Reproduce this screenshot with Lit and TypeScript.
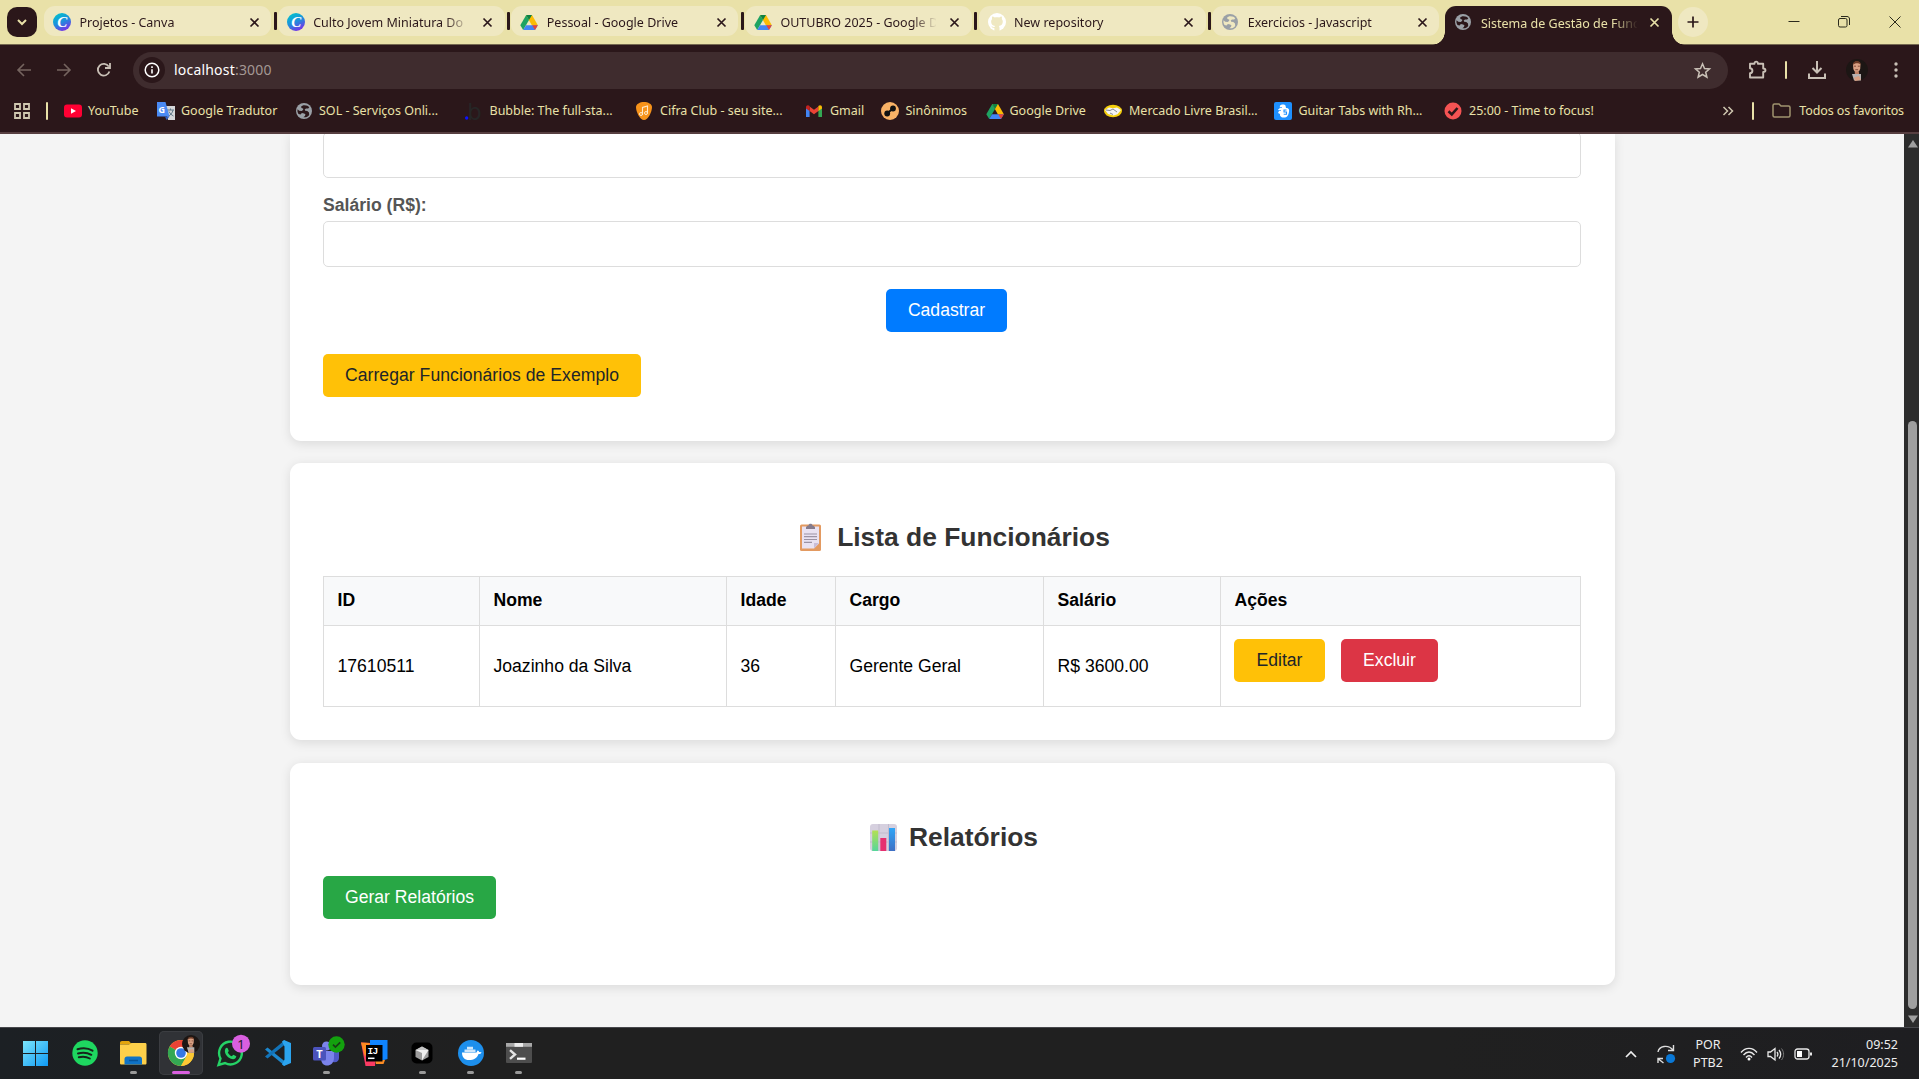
import { LitElement, html, css, svg } from "lit";
import { customElement, property } from "lit/decorators.js";

const drive = svg`<path d="M6 2h6l6 10.5h-6z" fill="#fbbc04"/><path d="M6.2 2 9 6.9 3.2 17 .3 12.2z" fill="#1ea362"/><path d="M6.2 2H12L9 6.9z" fill="#0d8043"/><path d="M3.2 17 6 12.2h11.8L15 17z" fill="#4285f4"/><path d="M12.2 12.2h5.6L15 17z" fill="#ea4335"/>`;
const globe = (cut: string) => svg`<circle cx="9" cy="9" r="8" fill="#9aa0a6"/><path d="M9.5 3.2c-1.600 0-2.800.6-3.600 1.700L7 6.200l1.200.2v1.300L6.800 9l-2.600-.2-1.600-1.500C2.200 9 2.500 10.500 3.500 12l2 .4 1.400-1.300 2.300.3 1.300 1.200-.6 1.500-1.500 1.100c2.400.5 4.400-.2 5.800-2.200l-.2-2.500-1.700-1.500-2.100-.2-.5-1.200 1.300-1.200h2.200l1.100-1.200c-1-1.200-2.300-1.900-5-2z" fill="${cut}"/>`;
const canva = (id: string) => svg`<defs><linearGradient id=${id} x1="0.2" y1="0" x2="0.7" y2="1"><stop offset="0" stop-color="#00c4cc"/><stop offset=".5" stop-color="#1f8fdc"/><stop offset="1" stop-color="#7d2ae8"/></linearGradient></defs><circle cx="9" cy="9" r="9" fill="url(#${id})"/><text x="9.300" y="14" text-anchor="middle" font-family="Liberation Serif, serif" font-style="italic" font-weight="700" font-size="15" fill="#fff">C</text>`;
const cross = svg`<path d="M.500.500l8 8M8.500.500l-8 8" stroke="currentColor" stroke-width="1.700" fill="none"/>`;
const face = svg`<circle cx="11" cy="11" r="11" fill="#1c1614"/><path d="M7 5.500C7.500 1.800 14 1.500 14.500 5.500l-.3 4.300c-.7 2.500-2.300 3.700-3.500 3.700S7.800 12 7.300 9.800z" fill="#d9a083"/><path d="M6.800 5.800C6.800 1 14.800.600 14.800 5.600 12.500 3.700 9 3.800 6.800 5.800z" fill="#6b3a26"/><path d="M8.800 12.500h4l.4 3h-4.400z" fill="#c08165"/><path d="M6 15h9v6.500H8z" fill="#b7b2b0"/><path d="M8 18.500l5-1.500 2 4-6 1z" fill="#d9a083"/><path d="M8 7.200h2M11.800 7.200h2M9.300 10.700h2.800" stroke="#6e3a2b" stroke-width=".8"/>`;
const github = svg`<circle cx="9" cy="9" r="9" fill="#fff"/><path d="M6.400 18v-3.100c-2 .4-2.600-.8-3-1.600 1.500-.3 1.400 1.300 3.100.8.1-.5.300-.9.600-1.200-2.500-.3-4-1.400-4-4.300 0-1 .3-1.800 1-2.500-.2-.7-.2-1.600.1-2.500 1 0 1.800.5 2.500 1 1.400-.4 3-.4 4.500 0 .8-.6 1.600-1 2.500-1 .3.900.4 1.700.1 2.500.7.7 1 1.500 1 2.500 0 2.900-1.500 4-4 4.300.4.400.7 1 .7 2V18z" fill="#efe8c1"/>`;

interface Tab { title: string; icon: unknown }
const tabs: Tab[] = [
  { title: "Projetos - Canva", icon: canva("cv1") },
  { title: "Culto Jovem Miniatura Do", icon: canva("cv2") },
  { title: "Pessoal - Google Drive", icon: drive },
  { title: "OUTUBRO 2025 - Google D", icon: drive },
  { title: "New repository", icon: github },
  { title: "Exercicios - Javascript", icon: globe("#efe8c1") },
];

interface Bookmark { label: string; start: number; pad: number; icon: unknown }
const bookmarks: Bookmark[] = [
  { label: "YouTube", start: 64, pad: 24, icon: svg`<rect y="2.500" width="18" height="13" rx="3" fill="#ff0033"/><path d="M7 6.300v5.400L12 9z" fill="#fff"/>` },
  { label: "Google Tradutor", start: 157, pad: 24, icon: svg`<path d="M8 4h10v14H11z" fill="#d5d7da"/><path d="M10 8h7M13.500 6.500V8M16 8c-.5 3-2.500 5-4.500 6M12 9.500c1 2 2.500 3.500 4.500 4.500" stroke="#607988" fill="none"/><path d="M0 0h8.500l4 14.500H0z" fill="#4a8af4"/><path d="M8 14.500h4.500L9.500 18z" fill="#2f5fc4"/><text x="1.600" y="10.500" font-family="Open Sans, sans-serif" font-weight="700" font-size="9" fill="#fff">G</text>` },
  { label: "SOL - Serviços Onli...", start: 295, pad: 24, icon: globe("#2b171a") },
  { label: "Bubble: The full-sta...", start: 465, pad: 24.500, icon: svg`<circle cx="1.700" cy="16" r="1.700" fill="#0c12ff"/><text x="2.500" y="17.500" font-family="Inter, sans-serif" font-size="23" fill="#262626">b</text>` },
  { label: "Cifra Club - seu site...", start: 636, pad: 24, icon: svg`<path d="M8 0c4 0 8 2 8 5 0 5-4 13-8 13S0 10 0 5C0 2 4 0 8 0z" fill="#f7931a"/><path d="M6.500 13V5.500L11.500 4v7.500" fill="none" stroke="#ffe9c9" stroke-width="1.100"/><circle cx="5" cy="12" r="1.500" fill="none" stroke="#ffe9c9"/><circle cx="10" cy="11" r="1.500" fill="none" stroke="#ffe9c9"/>` },
  { label: "Gmail", start: 806, pad: 24, icon: svg`<path d="M0 5v10h3.600V8z" fill="#4285f4"/><path d="M16 5v10h-3.600V8z" fill="#34a853"/><path d="M3.600 4.500V9L8 12.200 12.400 9V4.500L8 7.800z" fill="#ea4335"/><path d="M0 5.500C0 3.200 2.200 2.800 3.600 4v5L0 6.500z" fill="#c5221f"/><path d="M16 5.500c0-2.300-2.200-2.700-3.600-1.500v5L16 6.500z" fill="#fbbc04"/>` },
  { label: "Sinônimos", start: 881, pad: 24.500, icon: svg`<circle cx="9" cy="9" r="9" fill="#f9b266"/><path d="M6 11.500 12 6.500" stroke="#111" stroke-width="2"/><circle cx="12" cy="6.500" r="2.900" fill="#111"/><circle cx="6.200" cy="11.500" r="2.900" fill="#111"/>` },
  { label: "Google Drive", start: 986, pad: 23.500, icon: drive },
  { label: "Mercado Livre Brasil...", start: 1104, pad: 25, icon: svg`<ellipse cx="9" cy="9" rx="9" ry="6.200" fill="#f4cf0d"/><path d="M1 8 5 5.500l4 .8L13 5.500 17 8l-3.500 4.200-4 1.300L4 12z" fill="#f4f4f4"/><path d="M2 8l4 .5 3-1.500 4 3M6 11l3 1.500" stroke="#66707c" stroke-width=".8" fill="none"/>` },
  { label: "Guitar Tabs with Rh...", start: 1274, pad: 24.500, icon: svg`<rect width="18" height="18" rx="2" fill="#1e90ff"/><path d="M6 3.500C7 2 11 2 11.500 3.500L12 6c3 0 3.500 2 3 4s-1 5-4 5.500C9 16 5.500 15 6 12L4 11l1-2-1-1.500 1.500-1z" fill="#fff"/><path d="M12.500 8H10v2h2.500v2.200H9.700" stroke="#1e90ff" fill="none" stroke-width="1.100"/><path d="M4 5.500h4M4 8.500h3" stroke="#1e90ff" stroke-width=".7"/>` },
  { label: "25:00 - Time to focus!", start: 1444, pad: 25, icon: svg`<circle cx="9" cy="9" r="8.500" fill="#f55353"/><path d="M4.500 9.300 7.800 12.400 13.500 6" stroke="#2b171a" stroke-width="2.600" fill="none"/>` },
];

@customElement("browser-chrome")
class BrowserChrome extends LitElement {
  static styles = css`
    :host { display: block; font-family: "Noto Sans", "Open Sans", sans-serif; font-size: 12.500px; }
    svg { display: block; flex: none; overflow: visible; }
    .strip { display: flex; box-sizing: border-box; height: 45px; padding: 6px 0 0 7px; background: #e9e1a8; color: #2b171a; border-bottom: 1px solid #74684f; }
    .search { width: 30px; height: 30px; margin: 1px 7px 0 0; border-radius: 10px; background: #2b171a; display: flex; align-items: center; justify-content: center; flex: none; }
    .slot { width: 233.650px; display: flex; flex: none; }
    .tab { width: 227px; height: 30px; border-radius: 11px; background: #efe8c1; display: flex; align-items: center; box-sizing: border-box; padding: 2px 0 0 9px; }
    .bar { width: 3px; height: 18px; border-radius: 1px; background: #2b171a; margin: 6px 0 0 2.500px; }
    .slot:nth-last-of-type(4) .bar { visibility: hidden; }
    .title { width: 156px; margin-left: 8.500px; padding-top: 1.500px; white-space: nowrap; line-height: 18px; -webkit-mask-image: linear-gradient(90deg, #000 132px, transparent 157px); }
    .tab .close { margin-left: 14px; }
    .active { position: relative; width: 227px; height: 39px; flex: none; margin-left: -0.900px; background: #2b171a; border-radius: 11px 11px 0 0; display: flex; align-items: flex-start; color: #e9e1a8; box-sizing: border-box; padding: 7px 0 0 9.500px; }
    .active::before, .active::after { content: ""; position: absolute; bottom: 0; width: 13px; height: 13px; }
    .active::before { left: -13px; background: radial-gradient(circle at 0 0, transparent 12.500px, #2b171a 13px); }
    .active::after { right: -13px; background: radial-gradient(circle at 100% 0, transparent 12.500px, #2b171a 13px); }
    .active .close { margin: 5px 0 0 13px; }
    .plus { width: 30px; height: 30px; border-radius: 50%; background: #efe8c1; margin: 1px 0 0 6px; display: flex; align-items: center; justify-content: center; }
    .wins { display: flex; margin-left: auto; padding: 10px 18.500px 0 0; gap: 38.500px; color: #2b2a1c; }
    .tools { height: 50px; display: flex; align-items: center; background: #2b171a; padding-left: 16px; color: #c9c0b6; }
    .nav { width: 40px; flex: none; }
    .dim { color: #75645f; }
    .omni { width: 1595px; margin-left: -3px; height: 37px; border-radius: 19px; background: #3f2c2e; display: flex; align-items: center; box-sizing: border-box; padding: 0 17px 0 6px; flex: none; }
    .info { width: 26px; height: 26px; border-radius: 50%; background: #2b171a; display: flex; align-items: center; justify-content: center; color: #fff; }
    .url { margin-left: 9px; flex: 1; font-size: 14px; line-height: 20px; color: #fff; letter-spacing: 0.200px; }
    .url span { color: #a49894; }
    .icons { display: flex; align-items: center; margin-left: 20px; }
    .vline { width: 2px; height: 18px; background: #e9e1a8; border-radius: 1px; flex: none; }
    .marks { height: 31px; background: #2b171a; border-bottom: 2px solid #573f41; display: flex; align-items: center; padding: 0 15px 6px 14px; color: #e9e1a8; }
    .apps { width: 32px; flex: none; }
    .mark { display: flex; align-items: center; white-space: nowrap; flex: none; line-height: 18px; }
    .first { width: 16px; flex: none; }
    .all { display: flex; align-items: center; margin-left: auto; letter-spacing: -0.100px; }
  `;
  render() {
    return html`
      <div class="strip">
        <div class="search"><svg width="10" height="7"><path d="M1 1l4 4 4-4" stroke="#e9e1a8" stroke-width="2" fill="none"/></svg></div>
        ${tabs.map((t) => html`<div class="slot"><div class="tab"><svg width="18" height="18">${t.icon}</svg><div class="title">${t.title}</div><svg class="close" width="9" height="9">${cross}</svg></div><div class="bar"></div></div>`)}
        <div class="active"><svg width="18" height="18">${globe("#2b171a")}</svg><div class="title">Sistema de Gestão de Func</div><svg class="close" width="9" height="9">${cross}</svg></div>
        <div class="plus"><svg width="12" height="12"><path d="M6 .5v11M.5 6h11" stroke="#2b171a" stroke-width="1.700"/></svg></div>
        <div class="wins">
          <svg width="12" height="12"><path d="M.5 5.500h11" stroke="currentColor"/></svg>
          <svg width="12" height="12"><rect x=".5" y="2.500" width="8.500" height="8.500" rx="1.500" fill="none" stroke="currentColor"/><path d="M3 .5h6c1.500 0 2.500 1 2.500 2.500v6" fill="none" stroke="currentColor"/></svg>
          <svg width="12" height="12"><path d="M.5.500l11 11M11.500.500l-11 11" stroke="currentColor"/></svg>
        </div>
      </div>
      <div class="tools">
        <div class="nav dim"><svg width="16" height="14"><path d="M15 7H2M8 1 2 7l6 6" stroke="currentColor" stroke-width="1.600" fill="none"/></svg></div>
        <div class="nav dim"><svg width="16" height="14"><path d="M1 7h13M8 1l6 6-6 6" stroke="currentColor" stroke-width="1.600" fill="none"/></svg></div>
        <div class="nav"><svg width="16" height="16"><path d="M13.400 9.500A5.900 5.900 0 1 1 12.800 4.600M14 1v5H9" stroke="currentColor" stroke-width="1.800" fill="none"/></svg></div>
        <div class="omni">
          <div class="info"><svg width="16" height="16"><circle cx="8" cy="8" r="6.800" stroke="#fff" stroke-width="1.500" fill="none"/><path d="M8 7.200v4.300M8 4.300v1.700" stroke="#fff" stroke-width="1.600"/></svg></div>
          <div class="url">localhost<span>:3000</span></div>
          <svg width="17" height="17"><path d="M8.500 1.800l2 4.700 5 .4-3.800 3.300 1.200 5-4.400-2.700-4.400 2.700 1.200-5L1.500 6.900l5-.4z" stroke="#c9c0b6" stroke-width="1.500" fill="none"/></svg>
        </div>
        <div class="icons">
          <svg width="20" height="20"><path d="M2 3.800h4.500C6.300 1 10 .9 9.900 3.800h5.300v4.700c3 0 3 3.500 0 3.500v5.500H2v-4.200c3.200-.3 3.200-4.800 0-5z" stroke="currentColor" stroke-width="1.900" fill="none" stroke-linejoin="round"/></svg>
          <div class="vline" style="margin:0 21px 0 17px"></div>
          <svg width="18" height="18"><path d="M9 0v11M4.500 7 9 11.500 13.500 7M1 12.500V17h16v-4.500" stroke="currentColor" stroke-width="2" fill="none"/></svg>
          <svg style="margin:0 26px 0 20px" width="22" height="22">${face}</svg>
          <svg width="4" height="16"><circle cx="2" cy="2" r="1.700" fill="currentColor"/><circle cx="2" cy="8" r="1.700" fill="currentColor"/><circle cx="2" cy="14" r="1.700" fill="currentColor"/></svg>
        </div>
      </div>
      <div class="marks">
        <div class="apps"><svg width="16" height="16"><path d="M1 1h5v5H1zM10 1h5v5h-5zM1 10h5v5H1zM10 10h5v5h-5z" stroke="#cfc7b0" stroke-width="1.800" fill="none"/></svg></div>
        <div class="vline"></div><div class="first"></div>
        ${bookmarks.map((b, i) => html`<div class="mark" style="width:${(bookmarks[i + 1]?.start ?? 1722) - b.start}px"><svg width="18" height="18">${b.icon}</svg><span style="margin-left:${b.pad - 18}px">${b.label}</span></div>`)}
        <svg width="12" height="10"><path d="M1.500 1l4 4-4 4M6.500 1l4 4-4 4" stroke="#cfc7b0" stroke-width="1.500" fill="none"/></svg>
        <div class="all"><div class="vline"></div><svg style="margin:0 8px 0 18px" width="19" height="15"><path d="M1 2.500C1 1.500 1.500 1 2.500 1H7l2 2h7.500c1 0 1.500.5 1.500 1.500v8c0 1-.5 1.500-1.500 1.500h-14C1.500 14 1 13.500 1 12.500z" stroke="#a0946f" stroke-width="1.500" fill="none"/></svg><span>Todos os favoritos</span></div>
      </div>`;
  }
}

@customElement("staff-page")
class StaffPage extends LitElement {
  static styles = css`
    :host { display: flex; height: 893px; background: #f4f4f4; overflow: hidden; font-family: "Liberation Sans", Arial, sans-serif; font-size: 17.600px; }
    .view { width: 1904px; box-sizing: border-box; padding-left: 1px; display: flex; flex-direction: column; align-items: center; flex: none; }
    .card { width: 1325px; flex: none; box-sizing: border-box; background: #fff; border-radius: 11px; box-shadow: 0 2.200px 11px rgba(0, 0, 0, 0.1); padding: 59px 34px 0 33px; margin-bottom: 22px; }
    .form { height: 307px; padding-top: 0; border-radius: 0 0 11px 11px; }
    .list { height: 277px; margin-bottom: 23px; }
    .report { height: 222px; margin-bottom: 0; }
    .field { box-sizing: border-box; height: 46px; border: 1px solid #ddd; border-radius: 5px; }
    .cut { margin-top: -2px; clip-path: inset(2px 0 0 0); }
    label { display: block; margin: 17px 0 6px; line-height: 20px; font-weight: 700; color: #555; }
    .center { display: flex; justify-content: center; padding-right: 11px; margin: 22px 0; }
    .btn { display: inline-flex; box-sizing: border-box; height: 43px; padding-bottom: 1px; align-items: center; justify-content: center; border-radius: 5px; white-space: nowrap; color: #fff; }
    .save { width: 121px; background: #007bff; }
    .load { width: 318px; background: #ffc107; color: #212529; letter-spacing: 0.040px; }
    .edit { width: 91px; background: #ffc107; color: #212529; }
    .drop { width: 97px; background: #dc3545; }
    .make { width: 173px; background: #28a745; }
    h2 { margin: 0 0 24px; height: 30px; display: flex; justify-content: center; align-items: center; gap: 7px; font-size: 26.400px; line-height: 30px; color: #333; }
    h2 svg { display: block; }
    .grid { display: grid; grid-template-columns: 156px 247px 109px 208px 177px 360px; grid-template-rows: 49px 81px; border: solid #ddd; border-width: 1px 0 0 1px; width: 1257px; }
    .cell { display: flex; align-items: center; padding: 0 0 0 13.500px; border: solid #ddd; border-width: 0 1px 1px 0; }
    .head { background: #f8f9fa; font-weight: 700; padding-bottom: 2px; }
    .acts { align-items: flex-start; gap: 16px; padding: 13px 0 0 13px; }
    .scroll { flex: 1; background: #2c2c2c; display: flex; flex-direction: column; align-items: center; padding: 6px 0 4px 2px; box-sizing: border-box; }
    .thumb { width: 9px; height: 588px; border-radius: 5px; background: #9f9f9f; margin-bottom: auto; }
    .scroll svg { display: block; }
    .up { margin-bottom: 273px; }
  `;
  render() {
    const head = ["ID", "Nome", "Idade", "Cargo", "Salário", "Ações"];
    const row = ["17610511", "Joazinho da Silva", "36", "Gerente Geral", "R$ 3600.00"];
    return html`
      <div class="view">
        <section class="card form">
          <div class="field cut"></div>
          <label>Salário (R$):</label>
          <div class="field"></div>
          <div class="center"><span class="btn save">Cadastrar</span></div>
          <span class="btn load">Carregar Funcionários de Exemplo</span>
        </section>
        <section class="card list">
          <h2><svg width="36" height="30"><rect x="6" y="2.500" width="21" height="26.500" rx="1.500" fill="#e39a61"/><path d="M8 4.500h17v17l-5 5H8z" fill="#e9e2f2"/><path d="M25 21h-5v5.500z" fill="#c9bdd8"/><path d="M12 7c-.5-2 1-3.500 2.500-3.500 0-2.200 4-2.200 4 0 1.500 0 3 1.500 2.500 3.500z" fill="#857b8c"/><path d="M10 12h13M10 14.700h13M10 17.500h13M10 20.300h8" stroke="#9b92a4" stroke-width="1.200"/></svg>Lista de Funcionários</h2>
          <div class="grid">
            ${head.map((h) => html`<div class="cell head">${h}</div>`)}
            ${row.map((c) => html`<div class="cell">${c}</div>`)}
            <div class="cell acts"><span class="btn edit">Editar</span><span class="btn drop">Excluir</span></div>
          </div>
        </section>
        <section class="card report">
          <h2><svg width="36" height="30"><defs><linearGradient id="g1" x1="0" y1="0" x2="0" y2="1"><stop offset="0" stop-color="#b4e052"/><stop offset="1" stop-color="#56d69b"/></linearGradient><linearGradient id="g2" x1="0" y1="0" x2="0" y2="1"><stop offset="0" stop-color="#2fa5f7"/><stop offset="1" stop-color="#3e6fc4"/></linearGradient></defs><rect x="4" y="2" width="27" height="27" rx="3" fill="#d6d0df"/><path d="M13 2v27M22.500 2v27M4 11h27M4 20h27" stroke="#c2bccd"/><rect x="6.200" y="8.500" width="6" height="20.500" fill="url(#g1)"/><rect x="14.300" y="16" width="6" height="13" fill="#e6306f"/><rect x="23" y="6" width="6" height="23" fill="url(#g2)"/></svg>Relatórios</h2>
          <span class="btn make">Gerar Relatórios</span>
        </section>
      </div>
      <div class="scroll">
        <svg class="up" width="10" height="8"><path d="M5 0l5 7.500H0z" fill="#9f9f9f"/></svg>
        <div class="thumb"></div>
        <svg width="10" height="8"><path d="M5 8l5-7.500H0z" fill="#9f9f9f"/></svg>
      </div>`;
  }
}

interface App { icon: unknown; state: "" | "open" | "current" }
const apps: App[] = [
  { state: "", icon: svg`<circle cx="13" cy="13" r="12.700" fill="#1ed760"/><path d="M5.500 9.300c5-1.500 11-1 15 1.400M6 13.500c4.500-1.300 9.500-.8 13.300 1.300M6.800 17.300c4-1 7.800-.6 11 1.200" stroke="#17241b" stroke-width="2" stroke-linecap="round" fill="none"/>` },
  { state: "open", icon: svg`<path d="M0 3C0 1.700.7 1 2 1h7l3 3.500H0z" fill="#e2a50c"/><path d="M0 4.500h9L11.500 3H25c1 0 1.500.5 1.500 1.500V23c0 1-.5 1.500-1.500 1.500H1.500C.5 24.500 0 24 0 23z" fill="#fdd04a"/><path d="M4.500 24.500V19c0-1.500 1-2.500 2.500-2.500h12.500c1.500 0 2.500 1 2.500 2.500v5.500z" fill="#0f73c6"/><path d="M9 20.500h9" stroke="#07559b" stroke-width="1.500"/>` },
  { state: "current", icon: svg`<circle cx="13" cy="13" r="13" fill="#fcc934"/><path d="M13 13 1.700 6.500A13 13 0 0 1 24.300 6.500z" fill="#ea4335"/><path d="M13 13 1.700 6.500A13 13 0 0 0 13 26l5.600-9.800z" fill="#34a853"/><path d="M13 7h11.500A13 13 0 0 1 13 26l5.500-9.800z" fill="#fcc934"/><circle cx="13" cy="13" r="6.200" fill="#fff"/><circle cx="13" cy="13" r="4.800" fill="#3478e5"/><g transform="translate(14 -5) scale(.82)">${face}</g>` },
  { state: "", icon: svg`<path d="M1.500 25 3.500 18.500A11.400 11.400 0 1 1 8 23z" fill="#1b2620" stroke="#25d366" stroke-width="2.400"/><path d="M8.500 8.500c1-1 2-1 2.500.5l.8 2-1 1.500c1 2 2.200 3 4 3.800l1.500-1.500 3 1.500c-.3 3-3 3.500-5.500 2.500-3.500-1.500-7.500-6-5.300-10.300z" fill="#25d366"/><circle cx="24" cy="3.700" r="9" fill="#d95fe0"/><text x="24" y="8.600" text-anchor="middle" font-family="Noto Sans, sans-serif" font-size="13" fill="#1c1c1c">1</text>` },
  { state: "", icon: svg`<path d="M0 9.500 2.500 7.500 20 21.500V26z" fill="#1c88cf"/><path d="M0 16.500 2.500 18.500 20 4.500V0z" fill="#1273b8"/><path d="M19 0l7 3v20l-7 3-2-1.500 2.500-5V6.500L17 1.500z" fill="#2ba4ef"/>` },
  { state: "open", icon: svg`<circle cx="13.500" cy="6" r="4.500" fill="#7b83eb"/><circle cx="22" cy="9" r="3" fill="#5059c9"/><path d="M19 12h7v6c0 3-2.500 5-6 4z" fill="#5059c9"/><path d="M8 11h13v7c0 5-3.500 7.500-7 7.500S8 23 8 18z" fill="#7b83eb"/><rect y="7" width="13" height="13.500" rx="1.500" fill="#4b53bc"/><text x="6.500" y="17.700" text-anchor="middle" font-family="Open Sans, sans-serif" font-weight="700" font-size="11" fill="#fff">T</text><circle cx="23.500" cy="4.500" r="8.200" fill="#13a10e"/><path d="M20 4.700l2.400 2.400 4.800-4.800" stroke="#163d15" stroke-width="1.700" fill="none"/>` },
  { state: "", icon: svg`<path d="M0 2.500 10 3l5 10-1 13H4.500z" fill="#fc3b63"/><path d="M0 2.500 9 3 4 17z" fill="#ff8a20"/><path d="M9 0h17.500v19L20 21 9 9z" fill="#0f84ff"/><path d="M14 20h10l-1.500 4H15z" fill="#fd8c24"/><rect x="5" y="5" width="16.500" height="16.500" fill="#000"/><text x="6.500" y="14" font-family="Liberation Mono, monospace" font-weight="700" font-size="9.500" letter-spacing="-.7" fill="#fff">IJ</text><path d="M7 18.300h6.500" stroke="#fff" stroke-width="1.500"/>` },
  { state: "open", icon: svg`<rect x="2.500" y="2.500" width="21" height="21" rx="5" fill="#000"/><path d="M13 6.500l6.500 3.500v7L13 20.500 6.500 17v-7z" fill="#9c9c9c"/><path d="M6.500 10h13L13 20.500V13z" fill="#eee"/><path d="M13 6.500l6.500 3.500h-13z" fill="#c4c4c4"/>` },
  { state: "open", icon: svg`<circle cx="13" cy="13" r="13" fill="#1d8fec"/><path d="M4 12.500h14.500l1-2c1.300 0 1.500 1 1.500 1.500l2.500.3c-.5 1.500-1.600 1.800-3 1.800-1.500 4-4.500 6-9.500 6-4.500 0-7-2.800-7-7.600z" fill="#fff"/><path d="M6.500 9.500h11v2.500h-11zM9 6.800h6v2.500H9z" fill="#cfe7fb"/>` },
  { state: "open", icon: svg`<rect y="3" width="26" height="20" rx="1" fill="#4d4d4d"/><path d="M0 3h26v3.800H0z" fill="#a8a8a8"/><path d="M8.500 3H17v3.800H8.500z" fill="#ececec"/><path d="M4 10.200l5 4.300-5 4.300" stroke="#e3e3e3" stroke-width="2.400" fill="none"/><path d="M11 18.700h8.500" stroke="#fff" stroke-width="2.200"/>` },
];

@customElement("task-bar")
class TaskBar extends LitElement {
  @property({ type: Array }) apps = apps;
  static styles = css`
    :host { display: flex; box-sizing: border-box; height: 52px; border-top: 1px solid #47484c; background: linear-gradient(90deg, #1c2024, #202020 25%, #202020 75%, #1e1e21); color: #eee; font-family: "Noto Sans", "Open Sans", sans-serif; font-size: 12.500px; padding-left: 23px; }
    svg { display: block; overflow: visible; flex: none; }
    .start { width: 38px; padding-top: 13px; flex: none; }
    .app { width: 44px; height: 44px; box-sizing: border-box; margin: 3px 2.100px 0; border-radius: 5px; display: flex; flex-direction: column; align-items: center; padding-top: 9px; flex: none; }
    .current { background: #303236; box-shadow: inset 0 0 0 1px #3b3d41; }
    .dot { margin-top: 5px; width: 7px; height: 3px; border-radius: 2px; background: #9a9a9a; }
    .current .dot { width: 18px; background: #d95fe0; }
    .tray { margin-left: auto; display: flex; align-items: center; padding-right: 21px; }
    .lang { width: 44px; margin: 0 10px 0 11.500px; text-align: center; line-height: 18px; padding-top: 1px; }
    .clock { width: 86px; text-align: right; line-height: 18px; }
  `;
  render() {
    return html`
      <div class="start"><svg width="26" height="26"><defs><linearGradient id="w" x1="0" y1="0" x2="1" y2="1"><stop offset="0" stop-color="#7be5fb"/><stop offset="1" stop-color="#0f9af5"/></linearGradient></defs><path d="M0 0h12v12H0zM13 0h12v12H13zM0 13h12v12H0zM13 13h12v12H13z" fill="url(#w)"/></svg></div>
      ${this.apps.map((a) => html`<div class="app ${a.state}"><svg width="26" height="26">${a.icon}</svg>${a.state ? html`<div class="dot"></div>` : ""}</div>`)}
      <div class="tray">
        <svg width="12" height="8"><path d="M1 7l5-5 5 5" stroke="#eee" stroke-width="1.700" fill="none"/></svg>
        <svg style="margin-left:20px" width="18" height="20"><path d="M1 8C2 2 11 0 16 6M16.500 1v5.500H11M1 19v-4.500h5M1.500 15l5 4" stroke="#ddd" stroke-width="1.400" fill="none"/><circle cx="13.500" cy="14.500" r="4.600" fill="#0a78d6"/></svg>
        <div class="lang">POR<br>PTB2</div>
        <svg style="margin-right:9px" width="18" height="14"><path d="M1 5.500C5.500 0 12.500 0 17 5.500M3.500 8C7 4 11 4 14.500 8M6 10.500c2-2.300 4-2.300 6 0" stroke="#e8e8e8" stroke-width="1.400" fill="none"/><circle cx="9" cy="12" r="1.500" fill="#fff"/></svg>
        <svg style="margin-right:9px" width="18" height="14"><path d="M1 5v4.500h2.500L8 13V1.500L3.500 5z" stroke="#e8e8e8" stroke-width="1.300" fill="none"/><path d="M10 5c1 1.200 1 3.200 0 4.500M12 3c2 2.500 2 6 0 8.500" stroke="#e8e8e8" stroke-width="1.300" fill="none"/><path d="M14.500 1.500c2.800 3.500 2.800 8 0 11.500" stroke="#777" fill="none"/></svg>
        <svg width="18" height="12"><rect x="1" y="1" width="14" height="10" rx="2.500" stroke="#e8e8e8" stroke-width="1.300" fill="none"/><rect x="3" y="3" width="5" height="6" fill="#fff"/><path d="M17 4.500v3" stroke="#e8e8e8" stroke-width="2"/></svg>
        <div class="clock">09:52<br>21/10/2025</div>
      </div>`;
  }
}

@customElement("app-root")
class AppRoot extends LitElement {
  static styles = css`
    :host { display: flex; flex-direction: column; width: 1919px; height: 1079px; overflow: hidden; }
  `;
  render() {
    return html`<browser-chrome></browser-chrome><staff-page></staff-page><task-bar></task-bar>`;
  }
}
